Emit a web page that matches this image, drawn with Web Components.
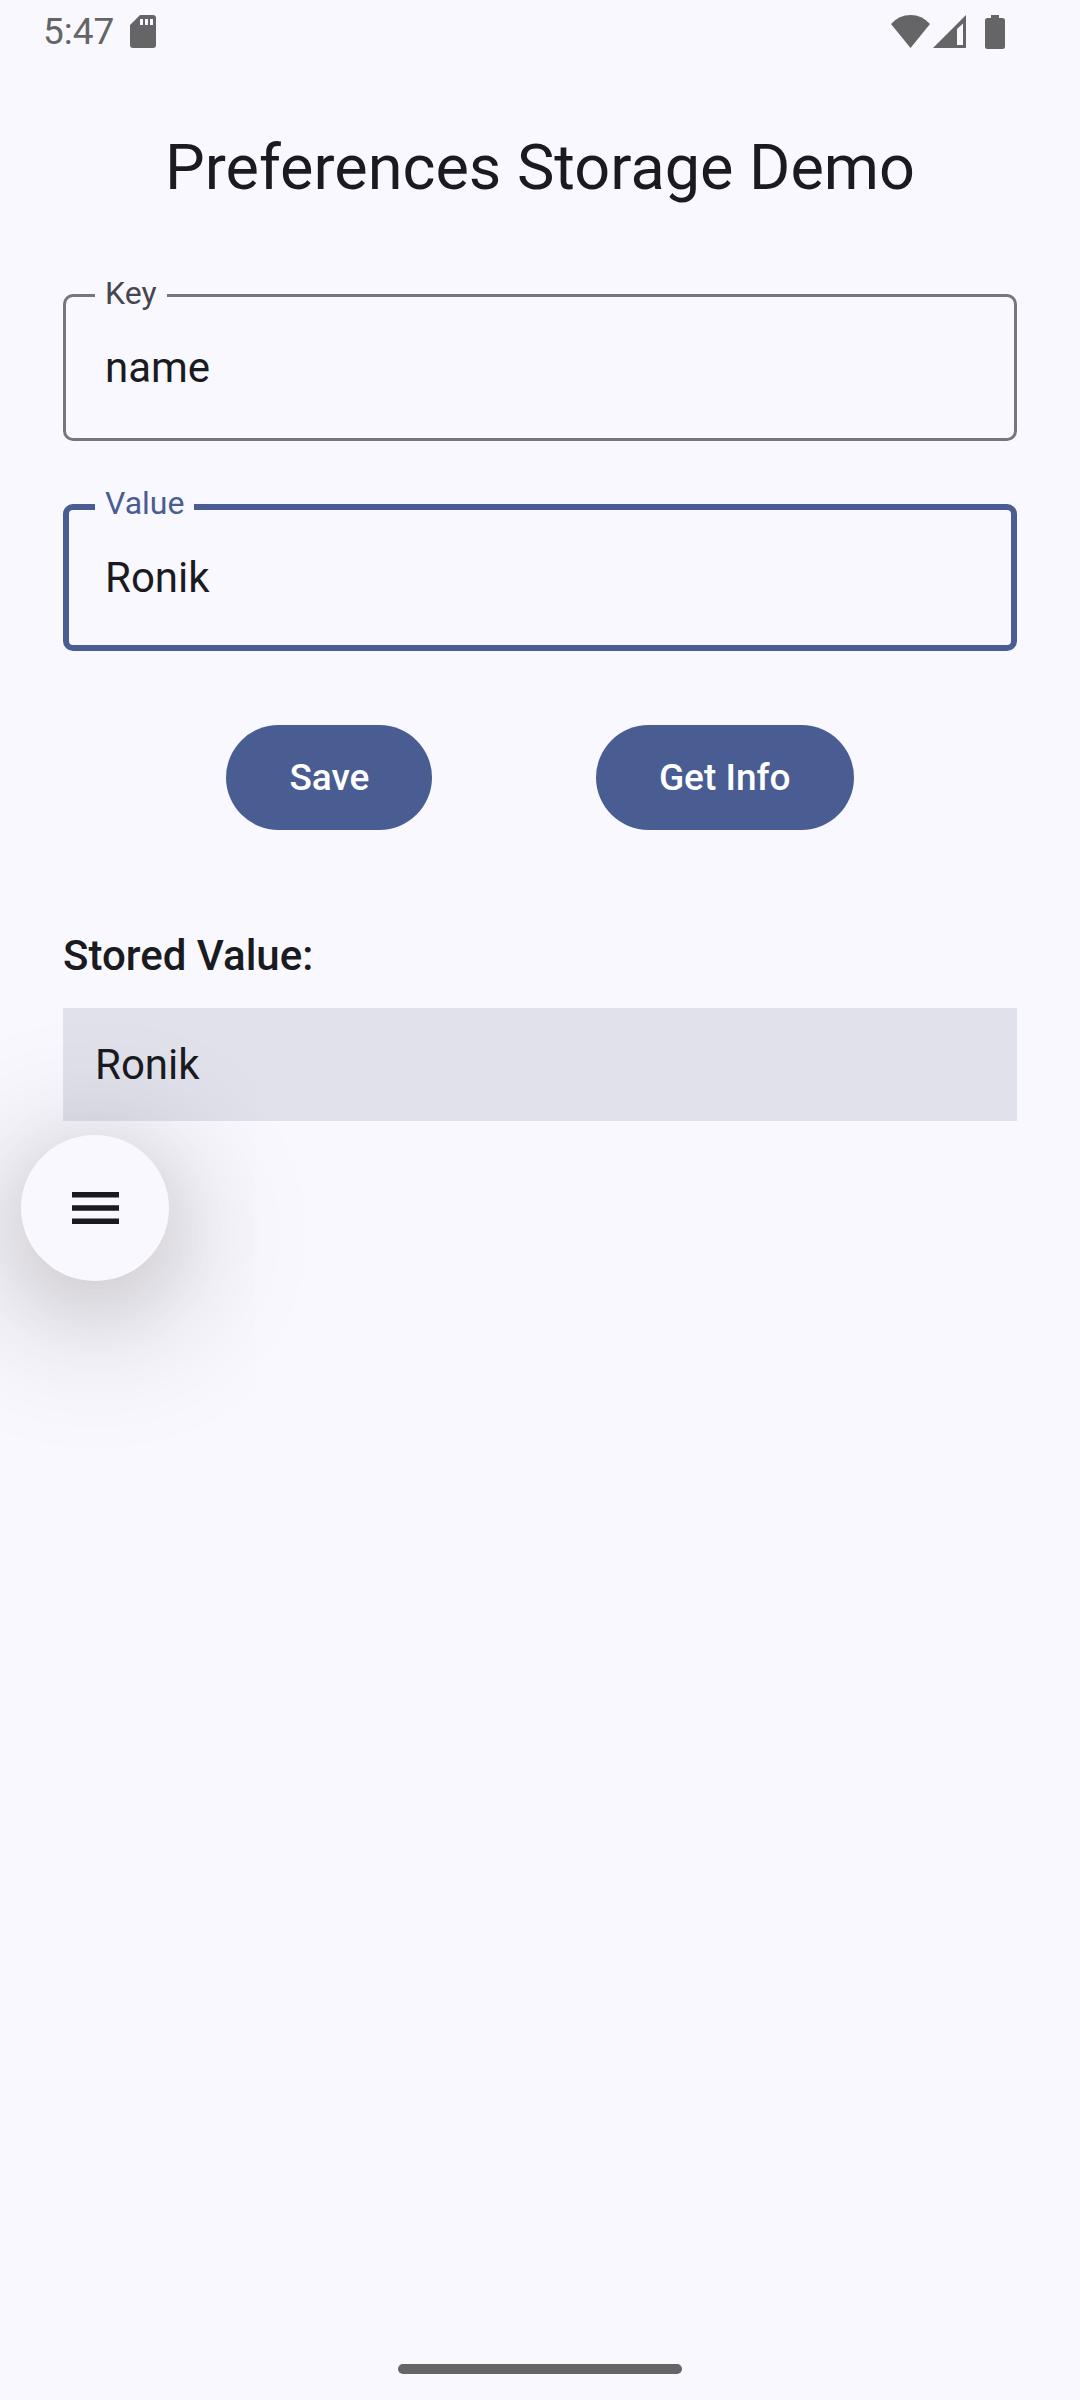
<!DOCTYPE html>
<html lang="en">
<head>
<meta charset="utf-8">
<meta name="viewport" content="width=device-width, initial-scale=1">
<title>Preferences Storage Demo</title>
<style>
  :root {
    --surface: #f9f8ff;
    --on-surface: #1a1b20;
    --label: #45464f;
    --outline: #757780;
    --primary: #4a5d92;
    --on-primary: #ffffff;
    --container: #e1e1eb;
    --system: #656567;
  }
  body {
    margin: 0;
    background: var(--surface);
    color: var(--on-surface);
    font-family: Roboto, "Liberation Sans", sans-serif;
  }
</style>
</head>
<body>
<preferences-app></preferences-app>

<script>
const define = (name, html, setup) => {
  const template = document.createElement('template');
  template.innerHTML = html;
  customElements.define(name, class extends HTMLElement {
    constructor() {
      super();
      this.attachShadow({ mode: 'open' }).append(template.content.cloneNode(true));
    }
    connectedCallback() {
      if (setup) setup(this, this.shadowRoot);
    }
  });
};

define('status-bar', `
  <style>
    :host { display: flex; justify-content: space-between; align-items: center; height: 63px; padding: 0 75px 0 43px; color: var(--system); font-size: 37px; line-height: 42px; }
    .group { display: flex; align-items: center; }
    .start { gap: 16px; }
    svg { display: block; fill: currentColor; }
    .signal { margin-left: 3px; }
    .battery { margin-left: 19px; }
  </style>
  <div class="group start">
    <time>5:47</time>
    <svg width="26" height="33" viewBox="0 0 26 33" aria-hidden="true"><path fill-rule="evenodd" d="M10 0H23Q26 0 26 3V30Q26 33 23 33H3Q0 33 0 30V10ZM10 4V10H13V4ZM15 4V10H18V4ZM20 4V10H23V4Z"/></svg>
  </div>
  <div class="group">
    <svg width="39" height="33" viewBox="0 0 39 33" aria-hidden="true"><path d="M0 9Q8 0 19.500 0Q31 0 39 9L19.500 33Z"/></svg>
    <svg class="signal" width="33" height="33" viewBox="0 0 33 33" aria-hidden="true"><path fill-rule="evenodd" d="M33 0V33H0ZM30 8.500L24 14V30H30Z"/></svg>
    <svg class="battery" width="20" height="34" viewBox="0 0 20 34" aria-hidden="true"><path d="M6 0H14V3H17.500Q20 3 20 5.500V31.500Q20 34 17.500 34H2.500Q0 34 0 31.500V5.500Q0 3 2.500 3H6Z"/></svg>
  </div>
`);

define('page-title', `
  <style>
    :host { display: block; }
    h1 { margin: 0; font-size: 63px; line-height: 84px; font-weight: 400; text-align: center; }
  </style>
  <h1><slot></slot></h1>
`);

define('outlined-field', `
  <style>
    :host { display: block; --stroke: 3px; --line: var(--outline); --tint: var(--label); }
    :host([active]) { --stroke: 6px; --line: var(--primary); --tint: var(--primary); }
    fieldset { box-sizing: border-box; min-width: 0; height: 168px; margin: 0; border: var(--stroke) solid var(--line); border-radius: 10px; padding: 0 calc(32px - var(--stroke)) 21px; display: flex; }
    legend { padding: 0 10px calc(1px + var(--stroke)); color: var(--tint); font-size: 32px; line-height: 41px; }
    label { display: block; }
    input { flex: 1; min-width: 0; box-sizing: border-box; height: calc(105px - 2 * var(--stroke)); margin: 0; border: 0; padding: 0 10px; outline: 0; background: none; color: var(--on-surface); font: inherit; font-size: 42px; }
  </style>
  <fieldset>
    <legend><label for="box"></label></legend>
    <input id="box" type="text">
  </fieldset>
`, (host, root) => {
  root.querySelector('label').textContent = host.getAttribute('label');
  root.querySelector('input').value = host.getAttribute('value') || '';
});

define('filled-button', `
  <style>
    :host { display: block; }
    button { display: block; height: 105px; border: 0; border-radius: 53px; padding: 0 63px; background: var(--primary); color: var(--on-primary); font: inherit; font-size: 37px; font-weight: 500; cursor: pointer; }
  </style>
  <button type="button"><slot></slot></button>
`);

define('stored-value', `
  <style>
    :host { display: flex; flex-direction: column; gap: 21px; }
    h2 { margin: 0; font-size: 42px; line-height: 63px; font-weight: 500; }
    output { display: block; padding: 32px; background: var(--container); font-size: 42px; line-height: 49px; }
  </style>
  <h2 id="heading">Stored Value:</h2>
  <output aria-labelledby="heading"><slot></slot></output>
`);

define('menu-bubble', `
  <style>
    :host { display: block; }
    button { display: flex; align-items: center; justify-content: center; width: 148px; height: 146px; border: 0; border-radius: 50%; padding: 0; background: var(--surface); color: var(--on-surface); box-shadow: 0 27px 150px rgba(0, 0, 0, .3), 0 18px 72px rgba(60, 20, 20, .08); cursor: pointer; }
    svg { display: block; fill: currentColor; }
  </style>
  <button type="button" aria-label="Menu">
    <svg width="47" height="32" viewBox="0 0 47 32" aria-hidden="true"><path d="M0 0H47V5.500H0ZM0 13.250H47V18.750H0ZM0 26.500H47V32H0Z"/></svg>
  </button>
`);

define('gesture-bar', `
  <style>
    :host { display: flex; justify-content: center; padding: 26px 0; }
    div { width: 284px; height: 10px; border-radius: 5px; background: var(--system); }
  </style>
  <div></div>
`);

define('preferences-app', `
  <style>
    :host { position: relative; display: flex; flex-direction: column; min-height: 100vh; overflow: hidden; }
    main { flex: 1; display: flex; flex-direction: column; padding: 63px; }
    .fields { display: flex; flex-direction: column; gap: 42px; margin-top: 63px; }
    .actions { display: flex; justify-content: space-evenly; margin-top: 74px; }
    stored-value { margin-top: 94px; }
    menu-bubble { position: absolute; left: 21px; top: 1135px; }
  </style>
  <status-bar></status-bar>
  <main>
    <page-title>Preferences Storage Demo</page-title>
    <div class="fields">
      <outlined-field label="Key" value="name"></outlined-field>
      <outlined-field label="Value" value="Ronik" active></outlined-field>
    </div>
    <div class="actions">
      <filled-button>Save</filled-button>
      <filled-button>Get Info</filled-button>
    </div>
    <stored-value>Ronik</stored-value>
  </main>
  <gesture-bar></gesture-bar>
  <menu-bubble></menu-bubble>
`);
</script>
</body>
</html>
